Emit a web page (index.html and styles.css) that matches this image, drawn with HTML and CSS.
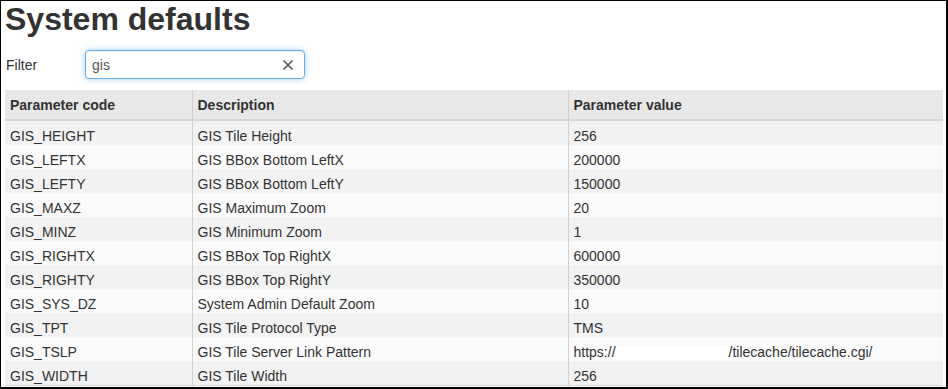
FILE: index.html
```html
<!DOCTYPE html>
<html lang="en">
<head>
<meta charset="utf-8">
<title>System defaults</title>
<link rel="stylesheet" href="styles.css">
</head>
<body>
<div class="frame">
  <h1 class="title">System defaults</h1>
  <div class="filter-row">
    <label class="filter-label" for="filter">Filter</label>
    <div class="filter-box">
      <input id="filter" class="filter-input" type="text" value="gis">
      <span class="clear" aria-label="clear">
        <svg width="12" height="12" viewBox="0 0 12 12"><path d="M1.5 1.5 L10.5 10.5 M10.5 1.5 L1.5 10.5" stroke="#555" stroke-width="1.6" fill="none"/></svg>
      </span>
    </div>
  </div>
  <table class="grid">
    <colgroup>
      <col class="c1"><col class="c2"><col class="c3">
    </colgroup>
    <thead>
      <tr><th>Parameter code</th><th>Description</th><th>Parameter value</th></tr>
    </thead>
    <tbody>
      <tr><td>GIS_HEIGHT</td><td>GIS Tile Height</td><td>256</td></tr>
      <tr><td>GIS_LEFTX</td><td>GIS BBox Bottom LeftX</td><td>200000</td></tr>
      <tr><td>GIS_LEFTY</td><td>GIS BBox Bottom LeftY</td><td>150000</td></tr>
      <tr><td>GIS_MAXZ</td><td>GIS Maximum Zoom</td><td>20</td></tr>
      <tr><td>GIS_MINZ</td><td>GIS Minimum Zoom</td><td>1</td></tr>
      <tr><td>GIS_RIGHTX</td><td>GIS BBox Top RightX</td><td>600000</td></tr>
      <tr><td>GIS_RIGHTY</td><td>GIS BBox Top RightY</td><td>350000</td></tr>
      <tr><td>GIS_SYS_DZ</td><td>System Admin Default Zoom</td><td>10</td></tr>
      <tr><td>GIS_TPT</td><td>GIS Tile Protocol Type</td><td>TMS</td></tr>
      <tr><td>GIS_TSLP</td><td>GIS Tile Server Link Pattern</td><td>https://<span class="redact"></span>/tilecache/tilecache.cgi/</td></tr>
      <tr><td>GIS_WIDTH</td><td>GIS Tile Width</td><td>256</td></tr>
    </tbody>
  </table>
</div>
</body>
</html>
```
FILE: styles.css
```css
* { box-sizing: border-box; }
html, body { margin: 0; padding: 0; background: #fff; }
body {
  font-family: "Liberation Sans", Arial, sans-serif;
  font-size: 14px;
  color: #333;
}
.frame {
  width: 948px;
  height: 389px;
  border-style: solid;
  border-color: #000;
  border-width: 1px 2px 2px 1px;
  padding: 0 3px 0 4px;
  overflow: hidden;
}
.title {
  margin: 0;
  font-size: 32px;
  font-weight: bold;
  line-height: 37px;
  color: #333;
}
.filter-row {
  display: flex;
  align-items: center;
  margin-top: 12px;
  height: 29px;
}
.filter-label {
  width: 80px;
  padding-left: 1px;
  font-size: 14px;
  color: #333;
}
.filter-box {
  position: relative;
  width: 220px;
  height: 29px;
}
.filter-input {
  width: 100%;
  height: 100%;
  margin: 0;
  border: 1px solid #66afe9;
  border-radius: 4px;
  padding: 0 28px 0 6px;
  font-family: "Liberation Sans", Arial, sans-serif;
  font-size: 14px;
  color: #555;
  outline: none;
  box-shadow: inset 0 1px 1px rgba(0,0,0,.075), 0 0 6px rgba(102,175,233,.6);
}
.clear {
  position: absolute;
  right: 11px;
  top: 9px;
  width: 12px;
  height: 12px;
  display: block;
}
.clear svg { display: block; }
.grid {
  margin-top: 11px;
  width: 100%;
  border-collapse: collapse;
  table-layout: fixed;
}
.c1 { width: 187px; }
.c2 { width: 376px; }
.grid th {
  background: #e8e8e8;
  text-align: left;
  font-weight: bold;
  line-height: 20px;
  padding: 5px 5px 4px 5px;
  border-bottom: 2px solid #d6d6d6;
  border-left: 1px solid #d0d0d0;
}
.grid td {
  line-height: 17px;
  height: 24px;
  padding: 7px 5px 0 5px;
  border-left: 1px solid #d0d0d0;
  white-space: nowrap;
}
.grid th:first-child, .grid td:first-child { border-left: none; }
.grid tbody tr:nth-child(odd) td { background: #f2f2f2; }
.grid tbody tr:nth-child(even) td { background: #fafafa; }
.grid tbody tr:last-child td { border-bottom: 1px solid #d6d6d6; }
.redact {
  display: inline-block;
  width: 113px;
  height: 14px;
  vertical-align: middle;
  background: #fff;
}
```
